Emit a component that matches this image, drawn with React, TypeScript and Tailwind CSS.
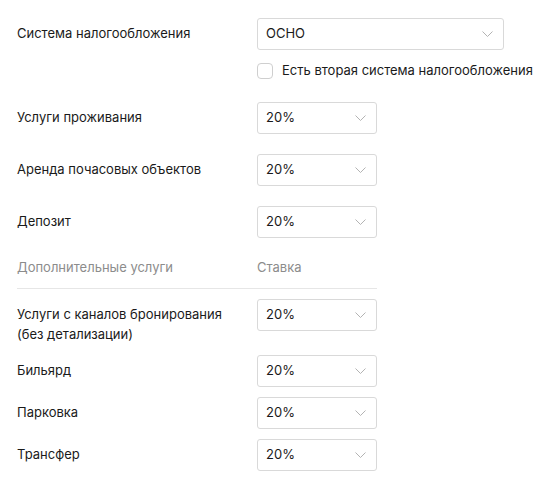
const mainRows = ['Услуги проживания', 'Аренда почасовых объектов', 'Депозит']

const extraRows = [
  'Услуги с каналов бронирования (без детализации)',
  'Бильярд',
  'Парковка',
  'Трансфер',
]

function Chevron() {
  return (
    <svg width="11" height="6" viewBox="0 0 11 6" fill="none" className="shrink-0">
      <path d="M0.5 0.5L5.5 5.5L10.5 0.5" stroke="#b3b3b3" strokeWidth="1" />
    </svg>
  )
}

function Select({ value, wide }: { value: string; wide?: boolean }) {
  return (
    <div
      className={`${wide ? 'w-[247px]' : 'w-[120px]'} h-8 flex items-center justify-between pl-[8px] pr-[10px] border border-[#d9d9d9] rounded-[3px] bg-white text-[13px] text-[#1a1a1a]`}
    >
      <span>{value}</span>
      <Chevron />
    </div>
  )
}

export default function App() {
  return (
    <div className="min-h-screen bg-white pl-[17px] pt-[18px] text-[13px] text-[#1a1a1a] font-['Inter',sans-serif]">
      {/* Tax system */}
      <div className="flex items-center">
        <div className="w-[240px]">Система налогообложения</div>
        <Select value="ОСНО" wide />
      </div>
      <label className="flex items-center gap-[9px] h-4 ml-[240px] mt-[13px]">
        <span className="w-4 h-4 border border-[#cfcfcf] rounded-[4px] bg-white" />
        <span>Есть вторая система налогообложения</span>
      </label>

      {/* Main services */}
      <div className="flex flex-col gap-5 mt-[23px]">
        {mainRows.map((label) => (
          <div key={label} className="flex items-center">
            <div className="w-[240px]">{label}</div>
            <Select value="20%" />
          </div>
        ))}
      </div>

      {/* Extra services */}
      <div className="w-[360px] mt-5">
        <div className="flex items-center h-5 text-[#8c8c8c]">
          <div className="w-[240px]">Дополнительные услуги</div>
          <div>Ставка</div>
        </div>
        <div className="border-b border-[#e6e6e6] mt-[10px]" />
      </div>
      <div className="flex flex-col gap-[10px] mt-[10px]">
        {extraRows.map((label) => (
          <div key={label} className="flex items-start">
            <div className="w-[240px] pr-[20px] pt-[5px] pb-[1px] leading-5">{label}</div>
            <Select value="20%" />
          </div>
        ))}
      </div>
    </div>
  )
}
